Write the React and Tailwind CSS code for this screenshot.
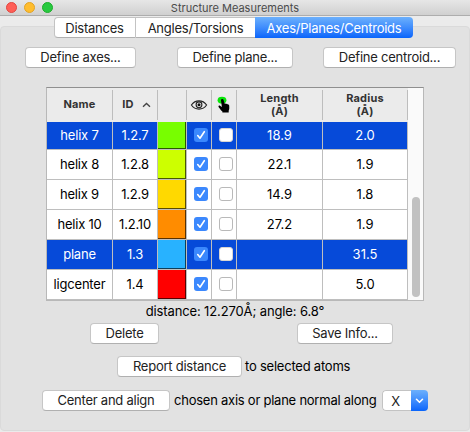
const rows = [
  { name: "helix 7", id: "1.2.7", color: "bg-[#78fe00]", length: "18.9", radius: "2.0", selected: true, h: "h-[28px]" },
  { name: "helix 8", id: "1.2.8", color: "bg-[#cdff00]", length: "22.1", radius: "1.9", h: "h-[30px]" },
  { name: "helix 9", id: "1.2.9", color: "bg-[#ffd900]", length: "14.9", radius: "1.8", h: "h-[30px]" },
  { name: "helix 10", id: "1.2.10", color: "bg-[#ff8c00]", length: "27.2", radius: "1.9", h: "h-[30px]" },
  { name: "plane", id: "1.3", color: "bg-[#28b2ff]", length: "", radius: "31.5", selected: true, h: "h-[30px]" },
  { name: "ligcenter", id: "1.4", color: "bg-[#ff0000]", length: "", radius: "5.0", h: "h-[30px]" },
];

const columns = "grid grid-cols-[66px_45px_29px_25px_25px_86px_85px]";

function Button({ className, children }) {
  return (
    <button
      className={`flex h-[21px] shrink-0 items-center justify-center whitespace-nowrap rounded-[4px] border border-[#c6c6c6] border-b-[#b0b0b0] bg-white pb-px tracking-[-0.24px] text-[#222] ${className}`}
    >
      {children}
    </button>
  );
}

function Checkbox({ checked, selected }) {
  if (!checked) {
    return (
      <span
        className={`block h-[14px] w-[14px] shrink-0 rounded-[3px] border bg-white ${selected ? "border-[#d9d6d2]" : "border-[#b9b9b9]"}`}
      />
    );
  }
  return (
    <span className="block h-[14px] w-[14px] shrink-0 rounded-[3px] bg-[#3b88fd]">
      <svg viewBox="0 0 14 14" className="h-[14px] w-[14px]" fill="none" stroke="#fff" strokeWidth="1.6" strokeLinecap="round" strokeLinejoin="round">
        <path d="M3.7 7.5 6 10.2 10.3 3.7" />
      </svg>
    </span>
  );
}

function EyeIcon() {
  return (
    <svg width="18" height="12" viewBox="0 0 18 12" fill="none" stroke="#222" className="shrink-0">
      <path d="M1.4 6C3.5 3 6 1.9 9 1.9S14.5 3 16.6 6C14.5 9 12 10.1 9 10.1S3.5 9 1.4 6Z" strokeWidth="1.1" />
      <circle cx="9" cy="5.8" r="2.9" strokeWidth="1.1" />
      <circle cx="9" cy="5.8" r="1.5" fill="#111" stroke="none" />
    </svg>
  );
}

function HandIcon() {
  return (
    <svg width="14" height="18" viewBox="0 0 14 18" className="shrink-0">
      <ellipse cx="5" cy="4.2" rx="4.4" ry="3.4" fill="#08e508" />
      <path
        d="M4 4.5C3.8 2.8 6.2 2.5 6.6 4L7.5 7.6C8.2 7.2 8.9 7.4 9.2 8C9.9 7.6 10.6 7.9 10.8 8.5C11.5 8.3 12.1 8.8 12.2 9.6L12.3 12C12.3 13.5 11.8 14 11.7 15V16.5H5.4V15.5C4.1 14.7 3 13 1.9 11.6C0.8 10.2 1.9 9 3.3 9.9L4.9 10.9Z"
        fill="#000"
      />
    </svg>
  );
}

function HeadCell({ children, className = "" }) {
  return (
    <div className={`flex h-[30px] items-center justify-center border-r border-[#bdbdbd] pb-px text-[11px] font-bold leading-[13px] tracking-[0.2px] text-[#333] ${className}`}>
      {children}
    </div>
  );
}

function Row({ row }) {
  const cell = "flex items-center justify-center border-r border-[#bebebe]";
  return (
    <div
      className={`${columns} ${row.h} border-b border-[#bebebe] text-[13px] ${row.selected ? "bg-[#064ad9] text-white" : "bg-white text-black"}`}
    >
      <div className={`${cell} pb-px tracking-[-0.2px]`}>{row.name}</div>
      <div className={`${cell} pb-px tracking-[-0.2px]`}>{row.id}</div>
      <div className="flex border-r border-[#bebebe]">
        <span className={`block w-full border-b-[1.5px] border-r-[1.5px] border-black/65 ${row.color}`} />
      </div>
      <div className={`${cell} pb-px pl-[4px]`}><Checkbox checked selected={row.selected} /></div>
      <div className={`${cell} pb-px pl-[4px]`}><Checkbox selected={row.selected} /></div>
      <div className={`${cell} pb-px`}>{row.length}</div>
      <div className={`${cell} pb-px`}>{row.radius}</div>
    </div>
  );
}

export default function App() {
  return (
    <div className="flex h-[432px] w-[470px] flex-col overflow-hidden bg-[#ebebeb] font-['Inter','Liberation_Sans',sans-serif] text-[13px] leading-[16px] text-black">
      <header className="grid h-[16px] shrink-0 grid-cols-[62px_1fr_62px] items-center border-b border-[#adadad] bg-linear-to-b from-[#e6e6e6] to-[#d0d0d0]">
        <div className="flex gap-[7px] pl-[6px]">
          <span className="h-[11px] w-[11px] rounded-full border border-[#e2463f] bg-[#ff5f57]" />
          <span className="h-[11px] w-[11px] rounded-full border border-[#e1a325] bg-[#ffbd2e]" />
          <span className="h-[11px] w-[11px] rounded-full border border-[#1dad2b] bg-[#28c940]" />
        </div>
        <h1 className="pt-[2px] text-center text-[11px] leading-[13px] text-[#4a4a4a]">Structure Measurements</h1>
      </header>
      <div className="z-10 ml-[54px] mt-[1px] flex h-[21px] w-[359px] shrink-0 self-start tracking-[-0.24px]">
        <div className="flex w-[82px] items-center justify-center rounded-l-[4px] border border-[#c3c3c3] border-b-[#b0b0b0] bg-white pr-px text-[#222]">Distances</div>
        <div className="flex w-[119px] items-center justify-center border-y border-[#c3c3c3] border-b-[#b0b0b0] bg-white text-[#222]">Angles/Torsions</div>
        <div className="flex flex-1 items-center justify-center rounded-r-[4px] bg-linear-to-b from-[#6cb0fc] to-[#0764fb] text-white">Axes/Planes/Centroids</div>
      </div>
      <main className="-mt-[12px] flex h-[405px] shrink-0 flex-col rounded-[4px] border border-[#dadada] bg-[#e2e2e2] pt-[20px]">
        <div className="flex pl-[24px]">
          <Button className="w-[111px]">Define axes...</Button>
          <Button className="ml-[41px] w-[116px]">Define plane...</Button>
          <Button className="ml-[30px] w-[133px]">Define centroid...</Button>
        </div>
        <section className="ml-[45px] mt-[19px] flex h-[214px] w-[378px] border border-[#b8b8b8] border-t-[#8f8f8f] bg-[#ebebeb]">
          <div className="w-[361px] shrink-0">
            <div className={`${columns} h-[34px] pt-[2px]`}>
              <HeadCell>Name</HeadCell>
              <HeadCell className="gap-[8px] pl-[3px]">
                ID
                <svg width="9" height="6" viewBox="0 0 9 6" fill="none" stroke="#444" strokeWidth="1.4"><path d="M1 4.8 4.5 1.5 8 4.8" /></svg>
              </HeadCell>
              <HeadCell />
              <HeadCell><EyeIcon /></HeadCell>
              <HeadCell><HandIcon /></HeadCell>
              <HeadCell><span className="text-center">Length<br />(Å)</span></HeadCell>
              <HeadCell><span className="text-center">Radius<br />(Å)</span></HeadCell>
            </div>
            {rows.map((row) => <Row key={row.name} row={row} />)}
          </div>
          <div className="flex flex-1 flex-col items-center justify-end bg-[#fafafa] pb-[3px]">
            <div className="h-[100px] w-[8px] rounded-full bg-[#c1c1c1]" />
          </div>
        </section>
        <p className="mt-[2px] text-center tracking-[-0.13px]">distance: 12.270Å; angle: 6.8°</p>
        <div className="mt-[4px] flex pl-[89px]">
          <Button className="w-[69px]">Delete</Button>
          <Button className="ml-[138px] w-[96px]">Save Info...</Button>
        </div>
        <div className="mt-[12px] flex items-center pl-[116px] tracking-[-0.22px]">
          <Button className="w-[125px]">Report distance</Button>
          <span className="ml-[3px] whitespace-nowrap pb-px">to selected atoms</span>
        </div>
        <div className="mt-[12px] flex items-center pl-[41px] tracking-[-0.24px]">
          <Button className="w-[128px]">Center and align</Button>
          <span className="ml-[4px] w-[208px] whitespace-nowrap pb-px">chosen axis or plane normal along</span>
          <div className="mt-[1px] flex h-[21px] w-[46px] shrink-0 overflow-hidden rounded-[4px]">
            <span className="flex flex-1 items-center justify-center rounded-l-[4px] border border-r-0 border-[#c3c3c3] bg-white pr-[3px] text-[#222]">X</span>
            <span className="flex w-[17px] items-center justify-center bg-linear-to-b from-[#6cb0fc] to-[#0764fb]">
              <svg width="9" height="6" viewBox="0 0 9 6" fill="none" stroke="#fff" strokeWidth="1.6" strokeLinecap="round" strokeLinejoin="round"><path d="M1.5 1.3 4.5 4.3 7.5 1.3" /></svg>
            </span>
          </div>
        </div>
      </main>
    </div>
  );
}
